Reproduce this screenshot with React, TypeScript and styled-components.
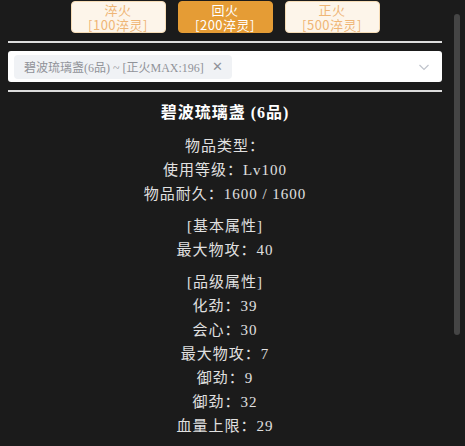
import styled, { createGlobalStyle } from "styled-components";

type Tier = {
  name: string;
  cost: string;
  active?: boolean;
};

type InfoSection = {
  heading?: string;
  lines: string[];
};

const tiers: Tier[] = [
  { name: "淬火", cost: "[100淬灵]" },
  { name: "回火", cost: "[200淬灵]", active: true },
  { name: "正火", cost: "[500淬灵]" },
];

const sections: InfoSection[] = [
  {
    lines: ["物品类型：", "使用等级：Lv100", "物品耐久：1600 / 1600"],
  },
  { heading: "[基本属性]", lines: ["最大物攻：40"] },
  {
    heading: "[品级属性]",
    lines: ["化劲：39", "会心：30", "最大物攻：7", "御劲：9", "御劲：32", "血量上限：29"],
  },
];

const GlobalStyle = createGlobalStyle`
  html, body {
    margin: 0;
    padding: 0;
    background: #1b1b1b;
    overflow: hidden;
  }
  body {
    font-family: "Liberation Serif", "Noto Sans CJK SC", serif;
  }
`;

const Page = styled.div`
  width: 434px;
  margin-left: 8px;
  padding-top: 1px;
  display: flex;
  flex-direction: column;
  gap: 8px;
`;

const TierRow = styled.div`
  display: flex;
  justify-content: center;
  gap: 12px;
`;

const TierButton = styled.button<{ $active?: boolean }>`
  width: 95px;
  height: 32px;
  padding: 0;
  border-radius: 4px;
  border: 1px solid ${({ $active }) => ($active ? "#e59c35" : "#f6dcb6")};
  background: ${({ $active }) => ($active ? "#e59c35" : "#fdf5ea")};
  color: ${({ $active }) => ($active ? "#ffffff" : "#efb676")};
  font-family: "Noto Sans CJK SC", "Liberation Sans", sans-serif;
  font-size: 13px;
  line-height: 15px;
  letter-spacing: 0.5px;
  text-align: center;
  cursor: pointer;
`;

const Divider = styled.hr`
  margin: 0;
  border: none;
  height: 2px;
  background: #dcdcdc;
`;

const SelectBox = styled.div`
  height: 31px;
  background: #ffffff;
  border-radius: 3px;
  display: flex;
  align-items: center;
  padding: 0 12px 0 6px;
`;

const Tag = styled.span`
  height: 24px;
  display: flex;
  align-items: center;
  gap: 8px;
  padding: 0 9px 0 10px;
  background: #f0f2f5;
  border-radius: 4px;
  color: #909399;
  font-size: 12px;
  white-space: nowrap;
`;

const Close = styled.span`
  font-family: "Liberation Sans", sans-serif;
  font-size: 13px;
  color: #909399;
`;

const Chevron = styled.svg`
  margin-left: auto;
  width: 12px;
  height: 12px;
`;

const Details = styled.div`
  display: flex;
  flex-direction: column;
  align-items: center;
  padding-top: 1px;
  gap: 8px;
`;

const Title = styled.div`
  color: #ffffff;
  font-size: 16px;
  font-weight: 600;
  line-height: 24px;
  letter-spacing: 1px;
  margin-bottom: 1px;
`;

const Section = styled.div`
  display: flex;
  flex-direction: column;
  align-items: center;
`;

const Line = styled.div`
  color: #e0e0e0;
  font-size: 15px;
  line-height: 24px;
  letter-spacing: 1px;
  white-space: pre;
`;

const ScrollThumb = styled.div`
  position: fixed;
  top: 14px;
  left: 454px;
  width: 6px;
  height: 321px;
  border-radius: 3px;
  background: #454545;
`;

export default function App() {
  return (
    <>
      <GlobalStyle />
      <Page>
        <TierRow>
          {tiers.map((t) => (
            <TierButton key={t.name} type="button" $active={t.active}>
              {t.name}
              <br />
              {t.cost}
            </TierButton>
          ))}
        </TierRow>
        <Divider />
        <SelectBox>
          <Tag>
            碧波琉璃盏(6品) ~ [正火MAX:196]
            <Close>✕</Close>
          </Tag>
          <Chevron viewBox="0 0 12 12">
            <path d="M1.5 4 L6 8.5 L10.5 4" fill="none" stroke="#c0c4cc" strokeWidth="1.2" />
          </Chevron>
        </SelectBox>
        <Divider />
        <Details>
          <Title>碧波琉璃盏 (6品)</Title>
          {sections.map((s, i) => (
            <Section key={i}>
              {s.heading && <Line>{s.heading}</Line>}
              {s.lines.map((l, j) => (
                <Line key={j}>{l}</Line>
              ))}
            </Section>
          ))}
        </Details>
      </Page>
      <ScrollThumb />
    </>
  );
}
